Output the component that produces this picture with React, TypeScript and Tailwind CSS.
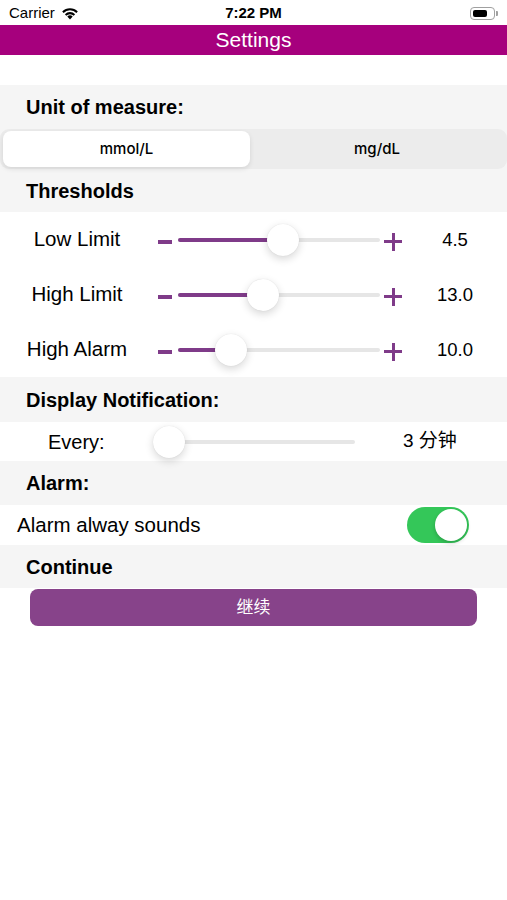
import React from "react";

const font = { fontFamily: '"Liberation Sans", Arial, "Noto Sans CJK SC", sans-serif' };
const segFont = { fontFamily: 'Inter, "Liberation Sans", Arial, sans-serif' };

function Slider({ left, right, value, fill }: { left: number; right: number; value: number; fill: boolean }) {
  return (
    <div className="relative h-[32px] shrink-0" style={{ width: right - left }}>
      <div className="absolute left-0 right-0 top-[14px] h-[4px] rounded-full bg-[#e6e6e6]" />
      {fill && (
        <div className="absolute left-0 top-[14px] h-[4px] rounded-full bg-[#7f3b89]" style={{ width: value }} />
      )}
      <div
        className="absolute top-0 h-[32px] w-[32px] rounded-full bg-white shadow-[0_3px_9px_rgba(0,0,0,0.16),0_0_1px_rgba(0,0,0,0.12)]"
        style={{ left: value - 16 }}
      />
    </div>
  );
}

function LimitRow({ label, thumb, val }: { label: string; thumb: number; val: string }) {
  return (
    <div className="flex h-[55px] items-center">
      <div className="w-[154px] shrink-0 text-center text-[20.5px] text-black">{label}</div>
      <div className="ml-[4px] mt-[4px] h-[4px] w-[14px] shrink-0 bg-[#7f3b89]" />
      <div className="ml-[6px] shrink-0">
        <Slider left={178} right={380} value={thumb - 178} fill />
      </div>
      <div className="relative ml-[4px] mt-[4px] h-[18px] w-[18px] shrink-0">
        <div className="absolute left-0 top-[7.5px] h-[3px] w-[18px] bg-[#7f3b89]" />
        <div className="absolute left-[7.5px] top-0 h-[18px] w-[3px] bg-[#7f3b89]" />
      </div>
      <div className="ml-[3px] w-[100px] shrink-0 text-center text-[18.5px] text-black">{val}</div>
    </div>
  );
}

function Header({ children, h }: { children: React.ReactNode; h: number }) {
  return (
    <div className="flex items-center bg-[#f5f5f5] pl-[26px] text-[20px] font-bold text-black" style={{ height: h }}>
      {children}
    </div>
  );
}

export default function App() {
  return (
    <div className="min-h-[900px] w-[507px] bg-white" style={font}>
      {/* status bar */}
      <div className="flex h-[25px] items-center justify-between px-[9px] pt-[2px] text-[15px] text-black">
        <div className="flex w-[120px] items-center gap-[6px]">
          <span>Carrier</span>
          <svg width="18" height="13" viewBox="0 0 18 13">
            <path d="M9 12.5 L6.3 9.6 A4 4 0 0 1 11.7 9.6 Z" fill="#000" />
            <path d="M3.9 7.2 A7.3 7.3 0 0 1 14.1 7.2 L12.7 8.7 A5.3 5.3 0 0 0 5.3 8.7 Z" fill="#000" />
            <path d="M1.2 4.4 A11 11 0 0 1 16.8 4.4 L15.4 5.9 A9 9 0 0 0 2.6 5.9 Z" fill="#000" />
          </svg>
        </div>
        <div className="font-bold">7:22 PM</div>
        <div className="flex w-[120px] justify-end">
          <div className="flex items-center">
            <div className="flex h-[13px] w-[25px] items-center rounded-[4px] border border-[#a0a0a0] p-[2px]">
              <div className="h-full w-[14px] rounded-[2px] bg-black" />
            </div>
            <div className="ml-[1px] h-[5px] w-[2px] rounded-r-[1px] bg-[#a0a0a0]" />
          </div>
        </div>
      </div>
      {/* title bar */}
      <div className="flex h-[30px] items-center justify-center bg-[#a6007d] text-[21px] text-white">Settings</div>
      <div className="h-[30px] bg-white" />

      <Header h={44}>Unit of measure:</Header>
      <div className="bg-[#f5f5f5]">
        <div className="flex h-[40px] items-center rounded-[9px] bg-[#ececec] px-[3px]" style={segFont}>
          <div className="flex h-[36px] w-[247px] items-center justify-center rounded-[8px] bg-white text-[15px] font-medium text-black shadow-[0_2px_5px_rgba(0,0,0,0.1)]">
            mmol/L
          </div>
          <div className="flex flex-1 items-center justify-center text-[15px] font-medium text-black">mg/dL</div>
        </div>
      </div>
      <Header h={43}>Thresholds</Header>

      <div className="bg-white">
        <LimitRow label="Low Limit" thumb={283} val="4.5" />
        <LimitRow label="High Limit" thumb={263} val="13.0" />
        <LimitRow label="High Alarm" thumb={231} val="10.0" />
      </div>

      <Header h={45}>Display Notification:</Header>
      <div className="flex h-[39px] items-center bg-white">
        <div className="w-[153px] shrink-0 pl-[48px] text-[20px] text-black">Every:</div>
        <Slider left={153} right={355} value={16} fill={false} />
        <div className="ml-[48px] text-[19px] text-black">3 分钟</div>
      </div>

      <Header h={44}>Alarm:</Header>
      <div className="flex h-[40px] items-center justify-between bg-white pl-[17px] pr-[38px]">
        <div className="text-[20.5px] text-black">Alarm alway sounds</div>
        <div className="flex h-[36px] w-[62px] items-center justify-end rounded-full bg-[#34c759] p-[2px]">
          <div className="h-[32px] w-[32px] rounded-full bg-white shadow-[0_2px_4px_rgba(0,0,0,0.2)]" />
        </div>
      </div>

      <Header h={43}>Continue</Header>
      <div className="px-[30px] pt-[1px]">
        <div className="flex h-[37px] items-center justify-center rounded-[8px] bg-[#87438a] text-[17px] text-white">
          继续
        </div>
      </div>
    </div>
  );
}
